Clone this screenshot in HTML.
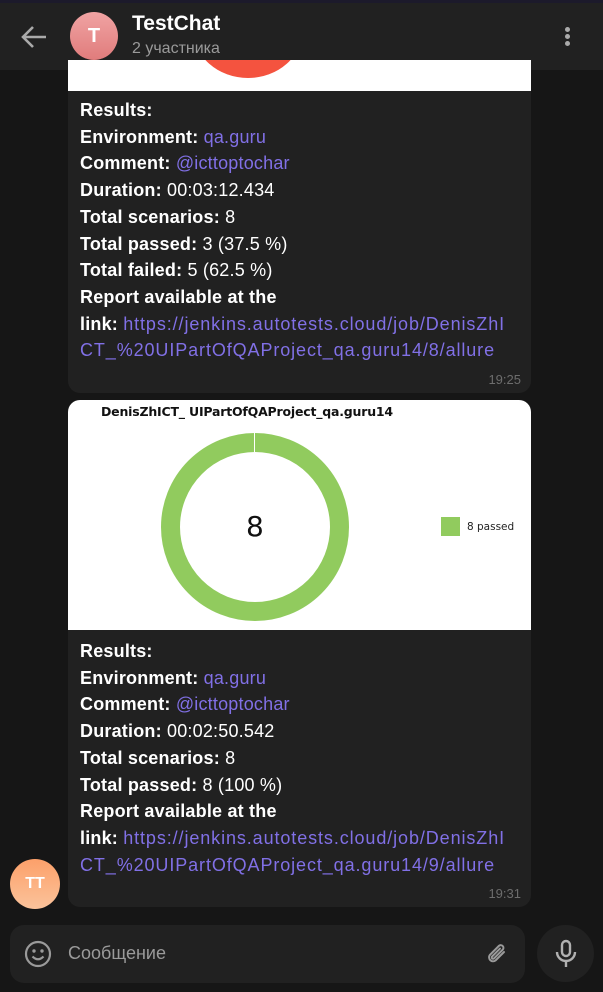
<!DOCTYPE html>
<html><head><meta charset="utf-8"><style>
*{margin:0;padding:0;box-sizing:border-box}
body{width:603px;height:992px;overflow:hidden;background:#161616;font-family:"Liberation Sans",sans-serif;position:relative;color:#fff}
.top{position:absolute;left:0;top:0;width:603px;height:3px;background:#1c1a2b}
.hdr{position:absolute;left:0;top:3px;width:603px;height:67px;background:#212121}
.bub{position:absolute;left:68px;width:463px;background:#212121;border-radius:12px;overflow:hidden}
.txt{padding:0 12px;font-size:18px;line-height:26.7px;letter-spacing:0.2px;white-space:nowrap}
.txt b{font-weight:bold}
.l{color:#8170e6}
.w{letter-spacing:0.9px}
.time{position:absolute;right:10px;font-size:13px;color:#6d6d6d}
</style></head><body>
<div class="top"></div>
<div class="hdr">
<svg style="position:absolute;left:20px;top:22px" width="28" height="24" viewBox="0 0 28 24"><path d="M26 12H4M13 2L3 12l10 10" stroke="#aaa" stroke-width="2.6" fill="none"/></svg>
<div style="position:absolute;left:70px;top:9px;width:48px;height:48px;border-radius:50%;background:linear-gradient(#f0a3a3,#e07c7c);color:#fff;font-weight:bold;font-size:20px;text-align:center;line-height:48px">T</div>
<div style="position:absolute;left:132px;top:9px;font-size:21px;font-weight:bold">TestChat</div>
<div style="position:absolute;left:132px;top:37px;font-size:16px;color:#9a9a9a">2 участника</div>
<div style="position:absolute;left:565px;top:24px;width:5px;height:5px;border-radius:50%;background:#aaa;box-shadow:0 7px 0 #aaa,0 14px 0 #aaa"></div>
</div>
<div class="bub" style="top:60px;height:333px;border-radius:0 0 12px 12px">
<div style="position:absolute;left:0;top:0;width:463px;height:31px;background:#fff;overflow:hidden"><div style="position:absolute;left:125px;top:-80px;width:110px;height:98px;border-radius:50%;background:#f4533f"></div></div>
<div class="txt" style="position:absolute;top:37px">
<b>Results:</b><br><b>Environment:</b> <span class="l">qa.guru</span><br><b>Comment:</b> <span class="l">@icttoptochar</span><br><b>Duration:</b> 00:03:12.434<br><b>Total scenarios:</b> 8<br><b>Total passed:</b> 3 (37.5 %)<br><b>Total failed:</b> 5 (62.5 %)<br><b>Report available at the</b><br><b>link:</b> <span class="l w">https://jenkins.autotests.cloud/job/DenisZhI</span><br><span class="l w">CT_%20UIPartOfQAProject_qa.guru14/8/allure</span>
</div>
<div class="time" style="top:312px">19:25</div>
</div>
<div class="bub" style="top:400px;height:507px">
<div style="position:absolute;left:0;top:0;width:463px;height:230px;background:#fff">
<div style="position:absolute;left:33px;top:4px;font-size:12.5px;font-weight:bold;color:#111;font-family:'DejaVu Sans',sans-serif;letter-spacing:-0.2px">DenisZhICT_ UIPartOfQAProject_qa.guru14</div>
<svg style="position:absolute;left:0;top:0" width="463" height="230"><circle cx="187" cy="127" r="84.5" fill="none" stroke="#91cb5e" stroke-width="19"/><line x1="186.5" y1="32" x2="186.5" y2="52" stroke="#fff" stroke-width="1"/><rect x="373" y="117" width="19" height="19" fill="#91cb5e"/></svg>
<div style="position:absolute;left:178px;top:110px;font-size:28px;color:#111;font-family:'DejaVu Sans',sans-serif">8</div>
<div style="position:absolute;left:399px;top:121px;font-size:10.5px;color:#222;font-family:'DejaVu Sans',sans-serif">8 passed</div>
</div>
<div class="txt" style="position:absolute;top:238px">
<b>Results:</b><br><b>Environment:</b> <span class="l">qa.guru</span><br><b>Comment:</b> <span class="l">@icttoptochar</span><br><b>Duration:</b> 00:02:50.542<br><b>Total scenarios:</b> 8<br><b>Total passed:</b> 8 (100 %)<br><b>Report available at the</b><br><b>link:</b> <span class="l w">https://jenkins.autotests.cloud/job/DenisZhI</span><br><span class="l w">CT_%20UIPartOfQAProject_qa.guru14/9/allure</span>
</div>
<div class="time" style="top:486px">19:31</div>
</div>
<div style="position:absolute;left:10px;top:859px;width:50px;height:50px;border-radius:50%;background:linear-gradient(#fca06a,#fbc39b);color:#fff;font-weight:bold;font-size:16px;text-align:center;line-height:50px">TT</div>
<div style="position:absolute;left:10px;top:925px;width:515px;height:58px;background:#212121;border-radius:14px">
<svg style="position:absolute;left:14px;top:15px" width="28" height="28" viewBox="0 0 28 28"><circle cx="14" cy="14" r="12" fill="none" stroke="#9a9a9a" stroke-width="2.2"/><circle cx="10" cy="11" r="1.7" fill="#9a9a9a"/><circle cx="18" cy="11" r="1.7" fill="#9a9a9a"/><path d="M8.5 16.5q5.5 5.5 11 0" stroke="#9a9a9a" stroke-width="2.2" fill="none"/></svg>
<div style="position:absolute;left:58px;top:18px;font-size:18px;color:#9a9a9a">Сообщение</div>
<svg style="position:absolute;left:474px;top:16px" width="26" height="26" viewBox="0 0 26 26"><path d="M20 11l-8.5 8.5a4 4 0 01-5.6-5.6L15 4.8a2.7 2.7 0 013.8 3.8L10 17.4a1.3 1.3 0 01-1.9-1.9L16 7.6" stroke="#9a9a9a" stroke-width="2" fill="none" stroke-linecap="round"/></svg>
</div>
<div style="position:absolute;left:537px;top:925px;width:57px;height:57px;border-radius:50%;background:#212121">
<svg style="position:absolute;left:16px;top:14px" width="26" height="30" viewBox="0 0 26 30"><rect x="9" y="2" width="8" height="15" rx="4" fill="none" stroke="#b0b0b0" stroke-width="2.4"/><path d="M4 13a9 9 0 0018 0M13 22v6" stroke="#b0b0b0" stroke-width="2.4" fill="none"/></svg>
</div>
</body></html>
